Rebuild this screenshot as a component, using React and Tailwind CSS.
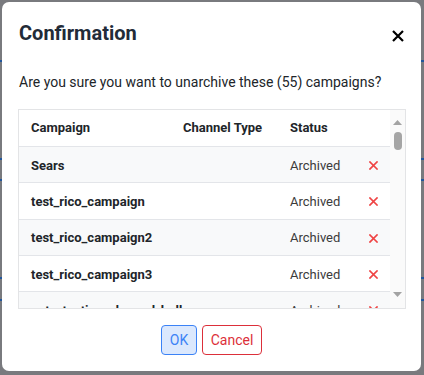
import React from 'react';

const rows = [
    { name: 'Sears', channel: '', status: 'Archived' },
    { name: 'test_rico_campaign', channel: '', status: 'Archived' },
    { name: 'test_rico_campaign2', channel: '', status: 'Archived' },
    { name: 'test_rico_campaign3', channel: '', status: 'Archived' },
    { name: 'auto_testing_channel_bulk', channel: '', status: 'Archived' },
];

function RemoveIcon() {
    return (
        <svg width="9" height="9" viewBox="0 0 9 9" className="text-[#ef4444]">
            <path d="M1 1L8 8M8 1L1 8" stroke="currentColor" strokeWidth="1.7" strokeLinecap="square" />
        </svg>
    );
}

function App() {
    return (
        <div className="relative h-[375px] w-[424px] overflow-hidden bg-[#797a7e] font-['Roboto',sans-serif]">
            {/* page behind the overlay */}
            <div className="flex flex-col">
                <div className="h-[60px]" />
                <div className="h-[2px] bg-[#21569c]" />
                <div className="h-[96px]" />
                <div className="h-[2px] bg-[#21569c]" />
                <div className="h-[19px]" />
                <div className="h-[2px] bg-[#21569c]" />
                <div className="h-[96px]" />
                <div className="h-[2px] bg-[#21569c]" />
                <div className="h-[20px]" />
                <div className="h-[2px] bg-[#21569c]" />
            </div>

            <div className="absolute left-[2px] top-[2px] flex h-[369px] w-[419px] flex-col rounded-[7px] bg-white px-[16px] pt-[19px]">
                <div className="flex items-start justify-between pl-[1px]">
                    <h1 className="text-[20px] leading-[24px] font-bold text-[#222b38]">Confirmation</h1>
                    <button className="mt-[9px] mr-[1px] text-black">
                        <svg width="12" height="12" viewBox="0 0 12 12">
                            <path d="M1 1L11 11M11 1L1 11" stroke="currentColor" strokeWidth="2.2" />
                        </svg>
                    </button>
                </div>

                <p className="mt-[27px] pl-[1px] text-[14px] leading-[20px] text-[#212529]">
                    Are you sure you want to unarchive these (55) campaigns?
                </p>

                <div className="mt-[17px] flex h-[200px] w-[388px] overflow-hidden border border-[#e3e4e6]">
                    <div className="flex w-[371px] flex-col text-[13px] text-[#212529]">
                        <div className="flex h-[37px] shrink-0 items-center border-b border-[#e3e5e9] font-bold">
                            <div className="w-[152px] pl-[12px]">Campaign</div>
                            <div className="w-[107px] pl-[12px]">Channel Type</div>
                            <div className="w-[78px] pl-[12px]">Status</div>
                            <div className="w-[34px]" />
                        </div>
                        {rows.map((row, i) => (
                            <div
                                key={row.name}
                                className={`flex h-[36.3px] shrink-0 items-center border-b border-[#e3e5e9] pt-[2px] ${i % 2 === 0 ? 'bg-[#f8f9fa]' : 'bg-white'}`}
                            >
                                <div className="w-[152px] pl-[12px] font-bold">{row.name}</div>
                                <div className="w-[107px] pl-[12px]">{row.channel}</div>
                                <div className="w-[78px] pl-[12px] text-[#3b3b3b]">{row.status}</div>
                                <div className="flex w-[34px] pl-[13px]">
                                    <RemoveIcon />
                                </div>
                            </div>
                        ))}
                    </div>
                    <div className="flex w-[16px] flex-col items-center bg-[#fafafa] pt-[10px]">
                        <svg width="9" height="5" viewBox="0 0 9 5">
                            <path d="M0 5L4.5 0L9 5Z" fill="#a3a3a3" />
                        </svg>
                        <div className="mt-[7px] h-[18px] w-[8px] rounded-full bg-[#a5a5a5]" />
                        <div className="flex-1" />
                        <svg width="9" height="5" viewBox="0 0 9 5" className="mb-[11px]">
                            <path d="M0 0L4.5 5L9 0Z" fill="#a3a3a3" />
                        </svg>
                    </div>
                </div>

                <div className="mt-[16px] flex justify-center gap-[5px]">
                    <button className="h-[30px] w-[36px] rounded-[4px] border border-[#3b82f6] bg-[#dbe8fd] text-[14px] text-[#3b82f6]">
                        OK
                    </button>
                    <button className="h-[30px] w-[60px] rounded-[4px] border border-[#dc2f3a] bg-white text-[14px] text-[#dc2f3a]">
                        Cancel
                    </button>
                </div>
            </div>
        </div>
    );
}

export default App;
